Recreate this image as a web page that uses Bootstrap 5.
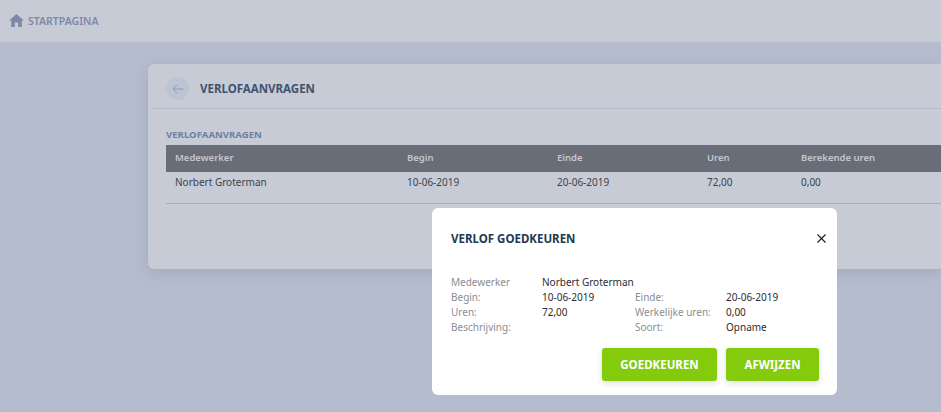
<!DOCTYPE html>
<html lang="nl">
<head>
<meta charset="utf-8">
<title>Verlofaanvragen</title>
<link rel="stylesheet" href="https://cdn.jsdelivr.net/npm/bootstrap@5.3.0/dist/css/bootstrap.min.css">
<style>
html,body{height:412px;overflow:hidden}
body{background:#b4bccd;font-family:"Noto Sans","Open Sans",sans-serif;font-size:10px;color:#3c3f47;width:941px;position:relative}
.topstrip{height:42px;background:#c6cbd6;padding-left:9px;color:#7d89a6;font-weight:600;font-size:10.5px}
.topstrip svg{margin:-2px 4px 0 0}
.topstrip span{margin-top:1px}
.panel{margin:22px 0 0 148px;height:205px;background:#c6cbd6;border-radius:6px 0 0 6px;box-shadow:0 4px 14px rgba(130,140,165,.35);padding:0 0 0 4px}
.panel-head{height:45px;border-bottom:1px solid #b7bdcb;padding:5px 0 0 14px}
.backcirc{width:23px;height:23px;border-radius:50%;background:#bcc3d2;margin-right:11px}
.panel-title{font-size:11.5px;font-weight:700;color:#3f536f}
.sect{font-size:9.6px;font-weight:700;color:#7080a0;margin:20px 0 0 14px;line-height:11px}
.leave-grid{margin:5px 0 0 14px;border-bottom:1px solid #a7acb8}
.grid-head,.grid-row{display:grid;grid-template-columns:232px 150px 150px 94px 1fr;padding-left:9px;align-items:center;white-space:nowrap}
.grid-head{height:27px;background:#696d78;color:#c3c7cf;font-weight:600;font-size:9.5px}
.grid-row{height:31px;padding-bottom:11px;color:#3f424a}
.approve{position:absolute;left:432px;top:208px;width:405px;height:187px;background:#fff;border-radius:6px;padding:0 18px 0 19px}
.approve-head{height:61px;margin-right:-7px}
.approve-title{font-size:11.5px;font-weight:700;color:#23394f}
.facts{display:grid;grid-template-columns:91px 93px 91px 1fr;grid-auto-rows:15px;align-items:center;margin-top:6px;line-height:15px;white-space:nowrap}
.fact-l{color:#8b8d92}
.fact-v{color:#2c2d30}
.act{background:#84cb0d;border:0;color:#fff;font-weight:700;font-size:11.5px;height:33px;border-radius:3px;box-shadow:0 2px 6px rgba(0,0,0,.14);padding:0}
.act:hover{background:#84cb0d;color:#fff}
.act-a{width:115px}.act-b{width:93px}
.actions{margin-top:13px;justify-content:flex-end;gap:9px}
</style>
</head>
<body>
<div class="topstrip d-flex align-items-center">
<svg width="15" height="13" viewBox="0 0 15 13" aria-hidden="true"><path d="M7.5 0 0 6.6h2.2V13h3.7V8.6h3.2V13h3.7V6.6H15z" fill="#7d89a6"/></svg>
<span>STARTPAGINA</span>
</div>
<div class="panel">
<div class="panel-head d-flex align-items-center">
<div class="backcirc d-flex align-items-center justify-content-center">
<svg width="12" height="10" viewBox="0 0 12 10" aria-hidden="true"><path d="M11.5 5H1M5 1 1 5l4 4" fill="none" stroke="#8f9ab2" stroke-width="1"/></svg>
</div>
<div class="panel-title">VERLOFAANVRAGEN</div>
</div>
<div class="sect">VERLOFAANVRAGEN</div>
<div class="leave-grid">
<div class="grid-head"><div>Medewerker</div><div>Begin</div><div>Einde</div><div>Uren</div><div>Berekende uren</div></div>
<div class="grid-row"><div>Norbert Groterman</div><div>10-06-2019</div><div>20-06-2019</div><div>72,00</div><div>0,00</div></div>
</div>
</div>
<div class="approve">
<div class="approve-head d-flex align-items-center justify-content-between">
<div class="approve-title">VERLOF GOEDKEUREN</div>
<svg width="9" height="9" viewBox="0 0 9 9" aria-label="Sluiten"><path d="M.5.5l8 8M8.5.5l-8 8" stroke="#1d1d1f" stroke-width="1.1" fill="none"/></svg>
</div>
<div class="facts">
<div class="fact-l">Medewerker</div><div class="fact-v">Norbert Groterman</div><div></div><div></div>
<div class="fact-l">Begin:</div><div class="fact-v">10-06-2019</div><div class="fact-l">Einde:</div><div class="fact-v">20-06-2019</div>
<div class="fact-l">Uren:</div><div class="fact-v">72,00</div><div class="fact-l">Werkelijke uren:</div><div class="fact-v">0,00</div>
<div class="fact-l">Beschrijving:</div><div></div><div class="fact-l">Soort:</div><div class="fact-v">Opname</div>
</div>
<div class="actions d-flex">
<button class="btn act act-a">GOEDKEUREN</button>
<button class="btn act act-b">AFWIJZEN</button>
</div>
</div>
<script src="https://cdn.jsdelivr.net/npm/bootstrap@5.3.0/dist/js/bootstrap.bundle.min.js"></script>
</body>
</html>
